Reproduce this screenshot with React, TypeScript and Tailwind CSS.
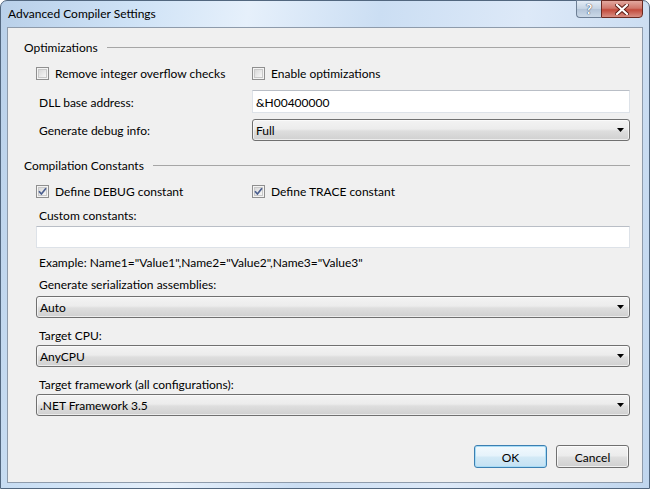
import React from "react";

function Checkbox({ checked }: { checked?: boolean }) {
  return (
    <span className="relative flex h-[13px] w-[13px] shrink-0 items-center justify-center border border-[#8f8f8f] bg-[#f4f4f4]">
      <span className="absolute inset-[1px] border border-[#c9c9c9] bg-[linear-gradient(135deg,#d9d9d9,#f7f7f7)]" />
      {checked && (
        <svg className="relative" width="11" height="11" viewBox="0 0 11 11">
          <path d="M2 5.2 L4.4 8 L9 2.2" fill="none" stroke="#4b5f8f" strokeWidth="1.7" />
        </svg>
      )}
    </span>
  );
}

function CheckItem({ label, checked }: { label: string; checked?: boolean }) {
  return (
    <label className="flex h-[16px] items-center gap-[6px]">
      <Checkbox checked={checked} />
      <span className="pt-[2px]">{label}</span>
    </label>
  );
}

function TextBox({ value, h }: { value?: string; h: string }) {
  return (
    <div
      className={`flex items-center border border-[#dde2e8] border-t-[#b9bec6] bg-white pl-[3px] pt-[2px] ${h}`}
    >
      {value}
    </div>
  );
}

function Select({ value }: { value: string }) {
  return (
    <div className="flex h-[22px] items-center justify-between rounded-[3px] border border-[#707070] bg-[linear-gradient(#f3f3f3,#ececec_45%,#dedede_55%,#d0d0d0)] pl-[3px] pr-[5px] shadow-[inset_0_0_0_1px_rgba(255,255,255,0.6)]">
      <span className="pt-[2px]">{value}</span>
      <svg width="7" height="4" viewBox="0 0 7 4">
        <path d="M0 0 H7 L3.5 4 Z" fill="#000" />
      </svg>
    </div>
  );
}

function GroupHeader({ title }: { title: string }) {
  return (
    <div className="flex h-[16px] items-center gap-[9px]">
      <span className="pt-[2px]">{title}</span>
      <span className="h-px flex-1 bg-[#a6a6a6]" />
    </div>
  );
}

function Label({ text, className = "" }: { text: string; className?: string }) {
  return (
    <div className={`flex h-[16px] items-center pl-[3px] pt-[2px] ${className}`}>{text}</div>
  );
}

export default function App() {
  return (
    <div className="flex h-[489px] w-[650px] flex-col rounded-t-[7px] border border-[#52677f] bg-[linear-gradient(100deg,#b9d0e9_0%,#cee2f6_18%,#e6f0fb_34%,#cbdef3_52%,#dde9f8_72%,#c0d6ee_100%)] font-['Lato',sans-serif] text-[12px] leading-[16px] text-black">
      {/* title bar */}
      <div className="flex h-[26px] shrink-0 items-start pl-[7px] pr-[6px]">
        <div className="pt-[5px] text-[12px]">Advanced Compiler Settings</div>
        <div className="ml-auto -mt-px flex h-[18px]">
          <div className="flex w-[25px] items-center justify-center rounded-bl-[4px] border border-r-0 border-[#6d7f95] bg-[linear-gradient(#e3ecf6,#c4d3e3_50%,#b3c4d8_51%,#cbd9e8)] text-[14px] font-bold leading-none text-white [text-shadow:0_0_1px_#2d3f57,0_0_1px_#2d3f57]">
            ?
          </div>
          <div className="flex w-[42px] items-center justify-center rounded-br-[4px] border border-[#6b2a22] bg-[linear-gradient(#e2a89f,#d0776b_45%,#c24a3b_55%,#d88e83)]">
            <svg width="14" height="11" viewBox="0 0 14 11">
              <path d="M2 1 L12 10 M12 1 L2 10" stroke="#5a1a12" strokeWidth="4" strokeLinecap="square" />
              <path d="M2 1 L12 10 M12 1 L2 10" stroke="#ffffff" strokeWidth="2.2" strokeLinecap="square" />
            </svg>
          </div>
        </div>
      </div>

      {/* client area */}
      <div className="mx-[6px] flex h-[456px] shrink-0 flex-col border border-[#8e9bab] bg-[#f0f0f0] pl-[16px] pr-[12px] pt-[11px]">
        <GroupHeader title="Optimizations" />
        <div className="ml-3 mt-[10px] grid grid-cols-[216px_1fr]">
          <CheckItem label="Remove integer overflow checks" />
          <CheckItem label="Enable optimizations" />
        </div>
        <div className="ml-3 mt-[9px] grid grid-cols-[216px_1fr] items-center">
          <Label text="DLL base address:" />
          <TextBox value="&H00400000" h="h-[23px]" />
        </div>
        <div className="ml-3 mt-[6px] grid grid-cols-[216px_1fr] items-center">
          <Label text="Generate debug info:" />
          <Select value="Full" />
        </div>

        <div className="mt-[16px]">
          <GroupHeader title="Compilation Constants" />
        </div>
        <div className="ml-3 mt-[10px] grid grid-cols-[216px_1fr]">
          <CheckItem label="Define DEBUG constant" checked />
          <CheckItem label="Define TRACE constant" checked />
        </div>
        <Label text="Custom constants:" className="ml-3 mt-[8px]" />
        <div className="ml-3 mt-[3px]">
          <TextBox h="h-[22px]" />
        </div>
        <Label
          text={'Example: Name1="Value1",Name2="Value2",Name3="Value3"'}
          className="ml-3 mt-[6px]"
        />
        <Label text="Generate serialization assemblies:" className="ml-3 mt-[6px]" />
        <div className="ml-3 mt-[4px]">
          <Select value="Auto" />
        </div>
        <Label text="Target CPU:" className="ml-3 mt-[9px]" />
        <div className="ml-3 mt-[2px]">
          <Select value="AnyCPU" />
        </div>
        <Label text="Target framework (all configurations):" className="ml-3 mt-[9px]" />
        <div className="ml-3 mt-[2px]">
          <Select value=".NET Framework 3.5" />
        </div>

        <div className="mr-px mt-[29px] flex justify-end gap-[9px]">
          <button className="h-[23px] w-[73px] rounded-[3px] border border-[#3c7fb1] bg-[linear-gradient(#f2f9fd,#e6f3fb_45%,#d2e9f6_55%,#c4e1f3)] pt-[2px] font-normal shadow-[inset_0_0_0_1px_#a8dcf6]">
            OK
          </button>
          <button className="h-[23px] w-[73px] rounded-[3px] border border-[#707070] bg-[linear-gradient(#f3f3f3,#ececec_45%,#dedede_55%,#d0d0d0)] pt-[2px] font-normal shadow-[inset_0_0_0_1px_rgba(255,255,255,0.7)]">
            Cancel
          </button>
        </div>
      </div>
    </div>
  );
}
